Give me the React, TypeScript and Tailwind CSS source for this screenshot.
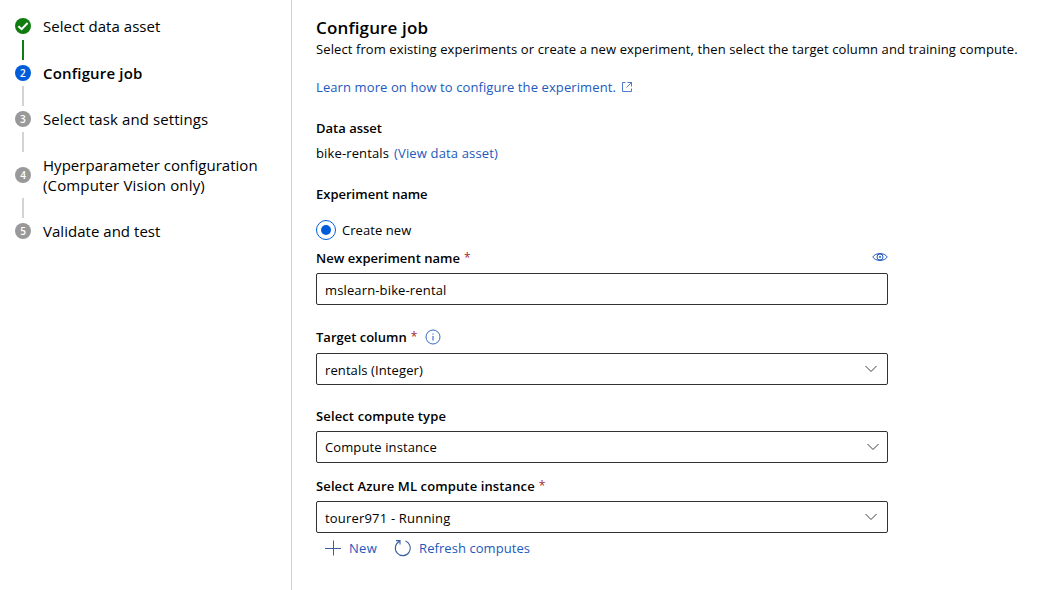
import type { ReactNode } from 'react';
import clsx from 'clsx';

function CheckBadge() {
  return (
    <svg width="16" height="16" viewBox="0 0 16 16" className="shrink-0">
      <circle cx="8" cy="8" r="8" fill="#107c10" />
      <path d="M3.4 8.2 6.6 11.2 12.6 5" fill="none" stroke="#fff" strokeWidth="2" />
    </svg>
  );
}

function NumberBadge({ n, active }: { n: number; active?: boolean }) {
  return (
    <span
      className={clsx(
        'flex size-4 shrink-0 items-center justify-center rounded-full text-[10px] leading-none font-semibold text-white',
        active ? 'bg-[#015cda]' : 'bg-[#999999]',
      )}
    >
      {n}
    </span>
  );
}

function Step({ badge, children, className }: { badge: ReactNode; children: ReactNode; className?: string }) {
  return (
    <li className={clsx('flex items-center gap-3 text-[15px] leading-5', className)}>
      {badge}
      <span>{children}</span>
    </li>
  );
}

function Connector({ done }: { done?: boolean }) {
  return (
    <li
      aria-hidden="true"
      className={clsx('ml-[7px] h-5 w-0.5', done ? 'mt-1 mb-[3px] bg-[#107c10]' : 'my-[3px] bg-[#d4d3d2]')}
    />
  );
}

function Label({ children, required, className }: { children: ReactNode; required?: boolean; className?: string }) {
  return (
    <span className={clsx('h-5 leading-5 font-semibold', className)}>
      {children}
      {required && (
        <span className="ml-1 align-[1px] text-[12px] leading-none font-normal tracking-normal text-[#a4262c]">*</span>
      )}
    </span>
  );
}

function Chevron({ className }: { className?: string }) {
  return (
    <svg width="12" height="8" viewBox="0 0 12 8" className={clsx('shrink-0', className)}>
      <path d="M.5 1 6 6.5 11.5 1" fill="none" stroke="#403e3d" strokeWidth="1" />
    </svg>
  );
}

function Field({ children, className }: { children: ReactNode; className?: string }) {
  return (
    <div
      className={clsx(
        'flex h-8 w-[572px] items-start justify-between rounded-[2px] border border-[#323130] pl-2 leading-5',
        className,
      )}
    >
      {children}
    </div>
  );
}

export default function App() {
  return (
    <div className="flex h-[590px] w-[1047px] overflow-hidden bg-white font-['Open_Sans','Noto_Sans',sans-serif] text-[13px] text-black">
      <nav className="w-[292px] shrink-0 border-r border-[#d2d0ce] pt-4 pl-[15px]">
        <ol>
          <Step badge={<CheckBadge />} className="tracking-[0.036px]">Select data asset</Step>
          <Connector done />
          <Step badge={<NumberBadge n={2} active />} className="font-semibold tracking-[0.167px]">
            Configure job
          </Step>
          <Connector />
          <Step badge={<NumberBadge n={3} />} className="tracking-[0.09px]">Select task and settings</Step>
          <Connector />
          <Step badge={<NumberBadge n={4} />}>
            <span className="block tracking-[0.03px]">Hyperparameter configuration</span>
            <span className="block tracking-[0.145px]">(Computer Vision only)</span>
          </Step>
          <Connector />
          <Step badge={<NumberBadge n={5} />} className="tracking-[0.028px]">Validate and test</Step>
        </ol>
      </nav>

      <main className="flex flex-col items-start pt-4 pl-6">
        <h1 className="text-[17px] leading-[23px] font-semibold tracking-[0.15px]">Configure job</h1>
        <p className="leading-5 tracking-[0.1px] whitespace-nowrap">
          Select from existing experiments or create a new experiment, then select the target column and training
          compute.
        </p>

        <a className="mt-[18px] flex items-center text-[#2159bd]">
          <span className="leading-5 tracking-[0.1px]">Learn more on how to configure the experiment.</span>
          <svg width="12" height="12" viewBox="0 0 12 12" className="ml-[5px]" fill="none" stroke="currentColor">
            <path d="M4.5 1.5h-3v9h9v-3M6.5 1.5h4v4M10.5 1.5 5.5 6.5" strokeWidth=".8" />
          </svg>
        </a>

        <Label className="mt-[21px]">Data asset</Label>
        <div className="mt-[5px] flex gap-[5px] leading-5">
          <span className="tracking-[0.13px]">bike-rentals</span>
          <a className="tracking-[0.15px] text-[#2159bd]">(View data asset)</a>
        </div>

        <Label className="mt-[21px]">Experiment name</Label>
        <div className="mt-4 flex items-center gap-1.5">
          <span className="flex size-5 items-center justify-center rounded-full border border-[#015cda]">
            <span className="size-2.5 rounded-full bg-[#015cda]" />
          </span>
          <span className="leading-5 tracking-[0.06px]">Create new</span>
        </div>

        <div className="mt-2 flex w-[572px] items-start justify-between">
          <Label required className="tracking-[0.03px]">New experiment name</Label>
          <svg width="16" height="10" viewBox="0 0 16 10" className="mt-1 mr-[0.5px]" fill="none" stroke="#2159bd">
            <path d="M.8 5C3.5.4 12.5.4 15.2 5 12.5 9.6 3.5 9.6.8 5Z" strokeWidth="1" />
            <circle cx="8" cy="5" r="3" strokeWidth="1" />
            <circle cx="8" cy="5" r="1" fill="#2159bd" stroke="none" />
          </svg>
        </div>
        <Field className="mt-[5px] pt-1.5">
          <span className="tracking-[0.14px]">mslearn-bike-rental</span>
        </Field>

        <div className="mt-[22px] flex items-center gap-2">
          <Label required>Target column</Label>
          <svg width="16" height="16" viewBox="0 0 16 16" className="-mt-px" fill="none" stroke="#2159bd">
            <circle cx="8" cy="8" r="7" strokeWidth=".9" />
            <path d="M8 7v4.5M8 4.5v1.2" strokeWidth="1" />
          </svg>
        </div>
        <Field className="mt-1.5 pt-1.5 pr-2.5">
          <span className="tracking-[0.1px]">rentals (Integer)</span>
          <Chevron className="mt-[5px]" />
        </Field>

        <Label className="mt-[21px] tracking-[0.13px]">Select compute type</Label>
        <Field className="mt-[5px] pt-[5px] pr-2">
          <span className="tracking-[0.11px]">Compute instance</span>
          <Chevron className="mt-1.5" />
        </Field>

        <Label required className="mt-[13px] tracking-[0.12px]">Select Azure ML compute instance</Label>
        <Field className="mt-[5px] pt-1.5 pr-2.5">
          <span className="tracking-[0.19px]">tourer971 - Running</span>
          <Chevron className="mt-[5px]" />
        </Field>

        <div className="mt-[5px] flex items-center pl-[9px] leading-5 text-[#2159bd]">
          <svg width="16" height="16" viewBox="0 0 16 16" fill="none" stroke="#3a5fa0" strokeWidth="1">
            <path d="M8.5.5v15M0 8.5h16" />
          </svg>
          <span className="ml-2 tracking-[0.3px]">New</span>
          <svg width="18" height="18" viewBox="0 0 18 18" className="ml-[17px]" fill="none" stroke="#3a5fa0" strokeWidth="1.1">
            <path d="M11.5 2.1A7.5 7.5 0 1 1 5.3 2.5M2 1.6h4v4" />
          </svg>
          <span className="ml-[7px] tracking-[0.06px]">Refresh computes</span>
        </div>
      </main>
    </div>
  );
}
